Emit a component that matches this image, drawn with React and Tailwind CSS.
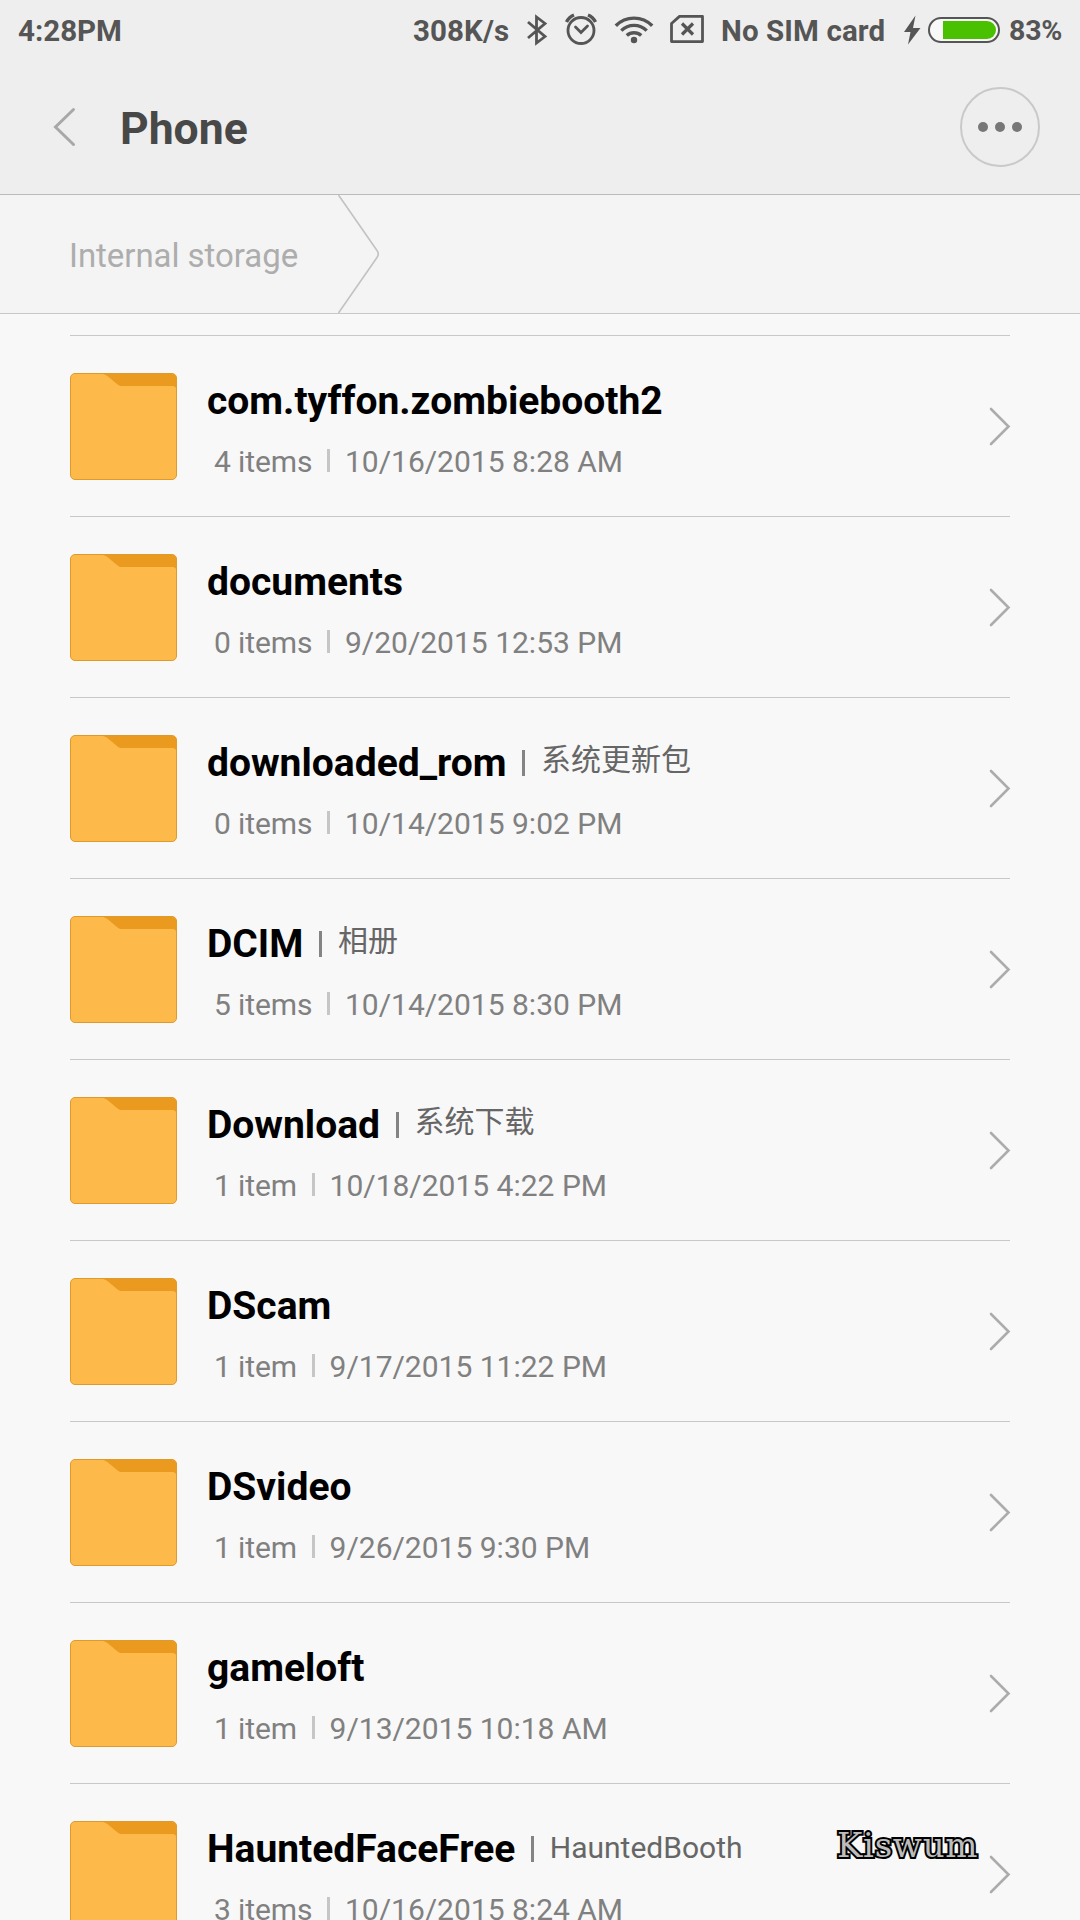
import React from 'react';

const ITEMS = [
  { name: 'com.tyffon.zombiebooth2', count: '4 items', date: '10/16/2015 8:28 AM' },
  { name: 'documents', count: '0 items', date: '9/20/2015 12:53 PM' },
  { name: 'downloaded_rom', alias: '系统更新包', cjk: true, count: '0 items', date: '10/14/2015 9:02 PM' },
  { name: 'DCIM', alias: '相册', cjk: true, count: '5 items', date: '10/14/2015 8:30 PM' },
  { name: 'Download', alias: '系统下载', cjk: true, count: '1 item', date: '10/18/2015 4:22 PM' },
  { name: 'DScam', count: '1 item', date: '9/17/2015 11:22 PM' },
  { name: 'DSvideo', count: '1 item', date: '9/26/2015 9:30 PM' },
  { name: 'gameloft', count: '1 item', date: '9/13/2015 10:18 AM' },
  { name: 'HauntedFaceFree', alias: 'HauntedBooth', count: '3 items', date: '10/16/2015 8:24 AM' },
];

function StatusBar() {
  return (
    <div className="flex h-[60px] items-center pl-[18px] text-[29.5px] leading-9 font-bold whitespace-nowrap text-[#555]">
      <span className="mt-[2px] w-[395px] shrink-0">4:28PM</span>
      <span className="mt-[2px] w-[112px] shrink-0 tracking-[0.1px]">308K/s</span>
      {/* Bluetooth */}
      <svg className="h-[60px] w-[38px] shrink-0" viewBox="525 0 38 60" fill="none" stroke="#555" strokeWidth="2.8">
        <path d="M528 22l17 14.5-8.5 6.5V17l8.5 6.500L528 38" />
      </svg>
      {/* Alarm */}
      <svg className="h-[60px] w-[50px] shrink-0" viewBox="563 0 50 60" fill="none" stroke="#555" strokeWidth="2.8">
        <circle cx="581" cy="30.500" r="13" />
        <path d="M575.500 27l5.500 5.500 6.500-6.500" strokeLinecap="round" />
        <path d="M566.500 22q2.500-5 7.500-7M595.500 22q-2.500-5-7.500-7" strokeWidth="3.400" />
      </svg>
      {/* Wi-Fi */}
      <svg className="h-[60px] w-[55px] shrink-0" viewBox="613 0 55 60" fill="none" stroke="#555" strokeWidth="3.400">
        <path d="M615.800 25.800a25.500 25.500 0 0 1 36.400 0M621.300 30.600a18 18 0 0 1 25.400 0M626.800 35.600a10.500 10.500 0 0 1 14.400 0" />
        <circle cx="634" cy="40" r="3.200" fill="#555" stroke="none" />
      </svg>
      {/* SIM */}
      <svg className="h-[60px] w-[53px] shrink-0" viewBox="668 0 53 60" fill="none" stroke="#555" strokeWidth="2.800" strokeLinejoin="round">
        <path d="M679.500 16.400h23v25.200h-31V23.500z" />
        <path d="M682 23.500l11 11M693 23.500l-11 11" strokeWidth="3.200" />
      </svg>
      <span className="mt-[2px] w-[181px] shrink-0 tracking-[0.1px]">No SIM card</span>
      {/* Charging battery */}
      <svg className="h-[60px] w-[107px] shrink-0" viewBox="902 0 107 60">
        <path d="M915.500 15.500L904 32h6.500L908 44.500 920.500 28h-7.500z" fill="#555" />
        <rect x="929" y="18" width="70" height="24" rx="12" fill="#f8f8f8" stroke="#555" strokeWidth="2" />
        <path d="M943 21h44a9 9 0 0 1 0 18h-44z" fill="#49c000" />
      </svg>
      <span className="mt-[2px] text-[28.5px] tracking-[-0.2px]">83%</span>
    </div>
  );
}

function Folder() {
  return (
    <svg className="mt-[37px] size-[107px] shrink-0" viewBox="0 0 107 107">
      <rect x="0.500" y="0.500" width="106" height="106" rx="4.500" fill="#fdba4a" stroke="#df9a2c" />
      <path d="M33 1h69a4.500 4.500 0 0 1 4.500 4.500V16q-1-3-4-3H51q-2 0-4-2L38 3.500Q36 1.500 33 1z" fill="#ea9a1e" />
    </svg>
  );
}

function Row({ item }) {
  return (
    <div className="flex h-[181px] shrink-0 items-start border-t border-[#c8c8c8] whitespace-nowrap">
      <Folder />
      <div className="ml-[29px] flex-1 pt-[40px]">
        <div className="flex h-12 items-start pl-px leading-[48px]">
          <span className="mt-px text-[39px] font-bold text-black">{item.name}</span>
          {item.alias && (
            <>
              <span className="mt-[12px] ml-[15.500px] h-[26px] w-[3px] shrink-0 bg-[#848484]" />
              <span className={item.cjk ? 'ml-[16px] -mt-[2px] text-[30px] text-[#666]' : 'ml-[16px] text-[30px] text-[#666]'}>
                {item.alias}
              </span>
            </>
          )}
        </div>
        <div className="mt-5 flex h-9 items-start pl-2 text-[30px] leading-9 text-[#808080]">
          <span className="tracking-[-0.1px]">{item.count}</span>
          <span className="mt-[5px] ml-[15px] h-[23px] w-[3px] bg-[#c6c6c6]" />
          <span className="ml-[14.500px]">{item.date}</span>
        </div>
      </div>
      <svg className="-mr-px mt-[70px] h-[40px] w-[22px] shrink-0" viewBox="0 0 22 40" fill="none" stroke="#acacac" strokeWidth="2.600" strokeLinecap="round">
        <path d="M2 3l17.500 17.500L2 38" />
      </svg>
    </div>
  );
}

export default function App() {
  return (
    <div className="relative flex h-[1920px] w-[1080px] flex-col overflow-hidden bg-[#f8f8f8] font-['Roboto','Noto_Sans_CJK_SC',sans-serif]">
      <header className="h-[195px] shrink-0 border-b border-[#bbb] bg-[#eee]">
        <StatusBar />
        <div className="flex h-[134px] items-center pr-[40px] pl-[52px]">
          <svg className="h-[40px] w-[24px]" viewBox="0 0 24 40" fill="none" stroke="#a8a8a8" strokeWidth="3" strokeLinecap="round">
            <path d="M21.500 2.500L3.500 20l18 17.500" />
          </svg>
          <h1 className="mt-[3px] ml-[44px] text-[44.5px] leading-[54px] font-bold text-[#484848]">Phone</h1>
          <div className="ml-auto flex size-[80px] items-center justify-center gap-[7px] rounded-full border-2 border-[#c9c9c9]">
            <span className="size-[10px] rounded-full bg-[#777]" />
            <span className="size-[10px] rounded-full bg-[#777]" />
            <span className="size-[10px] rounded-full bg-[#777]" />
          </div>
        </div>
      </header>
      <nav className="flex h-[119px] shrink-0 items-center border-b border-[#c8c8c8] bg-[#f4f4f4] pl-[69px]">
        <span className="mt-[3px] w-[267px] text-[33px] leading-10 tracking-[-0.05px] whitespace-nowrap text-[#adadad]">Internal storage</span>
        <svg className="h-[118px] w-[46px]" viewBox="0 0 46 118" fill="none" stroke="#c2c2c2" strokeWidth="1.600">
          <path d="M2.500 0L41 55.500q2.500 3.500 0 7L2.500 118" />
        </svg>
      </nav>
      <main className="mt-[21px] flex flex-1 flex-col overflow-hidden pr-[70px] pl-[70px]">
        {ITEMS.map((item) => (
          <Row key={item.name} item={item} />
        ))}
      </main>
      <div className="absolute top-[1825px] left-[837px] font-['DejaVu_Serif',serif] text-[34px] leading-[40px] tracking-[0.7px] text-[#bcbcbc] [-webkit-text-stroke:4px_#000] [paint-order:stroke_fill]">
        Kiswum
      </div>
    </div>
  );
}
